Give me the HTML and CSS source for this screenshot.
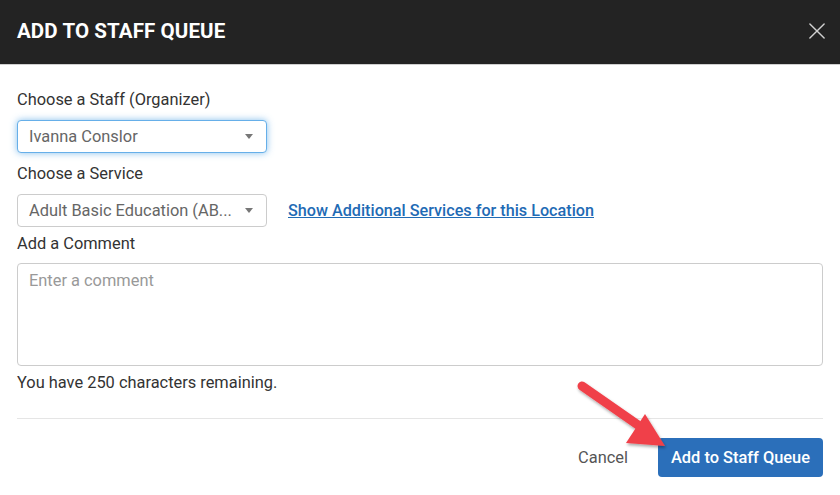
FILE: index.html
```html
<!DOCTYPE html>
<html>
<head>
<meta charset="utf-8">
<link rel="stylesheet" href="styles.css">
</head>
<body>
<div class="modal">
  <div class="modal-header">
    <h1 class="modal-title">ADD TO STAFF QUEUE</h1>
    <button class="close-btn" aria-label="Close">
      <svg width="18" height="18" viewBox="0 0 18 18"><path d="M1 1 L17 17 M17 1 L1 17" stroke="#d0d0d0" stroke-width="1.6" stroke-linecap="round"/></svg>
    </button>
  </div>
  <div class="modal-body">
    <div class="field-label">Choose a Staff (Organizer)</div>
    <div class="select focused"><span class="select-text">Ivanna Conslor</span><span class="caret"></span></div>
    <div class="field-label">Choose a Service</div>
    <div class="row">
      <div class="select"><span class="select-text">Adult Basic Education (AB...</span><span class="caret"></span></div>
      <a class="link" href="#">Show Additional Services for this Location</a>
    </div>
    <div class="field-label tight">Add a Comment</div>
    <div class="textarea"><span class="placeholder">Enter a comment</span></div>
    <div class="count">You have 250 characters remaining.</div>
  </div>
  <div class="modal-footer">
    <button class="btn-cancel">Cancel</button>
    <button class="btn-primary">Add to Staff Queue</button>
  </div>
  <svg class="arrow" width="120" height="90" viewBox="0 0 120 90">
    <defs>
      <filter id="sh" x="-20%" y="-20%" width="140%" height="140%">
        <feDropShadow dx="1" dy="2" stdDeviation="1.5" flood-color="#000" flood-opacity="0.35"/>
      </filter>
    </defs>
    <g filter="url(#sh)">
      <line x1="6" y1="5" x2="62" y2="44" stroke="#f0414a" stroke-width="9" stroke-linecap="round"/>
      <polygon points="89,65 50,62 69,33" fill="#f0414a"/>
    </g>
  </svg>
</div>
</body>
</html>
```

FILE: styles.css
```css
* { box-sizing: border-box; }
html, body { margin: 0; padding: 0; background: #fff; }
body { font-family: Roboto, "Liberation Sans", Arial, sans-serif; color: #333; }

.modal { position: relative; width: 840px; height: 495px; background: #fff; }

.modal-header {
  height: 65px;
  background: #232323;
  border-bottom: 1px solid #cfcfcf;
  display: flex;
  align-items: center;
  justify-content: space-between;
  padding: 0 13px 2px 17px;
}
.modal-title {
  margin: 0;
  color: #fff;
  font-size: 20.5px;
  font-weight: 700;
  letter-spacing: 0.1px;
}
.close-btn {
  background: none;
  border: 0;
  padding: 0;
  width: 20px;
  height: 20px;
  display: flex;
  align-items: center;
  justify-content: center;
  margin-bottom: 1px;
}
.close-btn svg { width: 16px; height: 16px; }

.modal-body { padding: 25px 17px 0 17px; }

.field-label {
  font-size: 16.4px;
  line-height: 20px;
  color: #333;
  margin-bottom: 10px;
}
.field-label.tight { margin-bottom: 9px; margin-top: -3px; }

.select {
  width: 250px;
  height: 33px;
  border: 1px solid #ccc;
  border-radius: 4px;
  display: flex;
  align-items: center;
  justify-content: space-between;
  padding: 0 13px 0 11px;
  margin-bottom: 11px;
  background: #fff;
}
.select.focused {
  height: 33px;
  border-color: #66afe9;
  box-shadow: 0 0 7px rgba(102, 175, 233, 0.8);
}
.select-text { font-size: 16.4px; color: #666; white-space: nowrap; }
.caret {
  width: 0; height: 0;
  border-left: 4.5px solid transparent;
  border-right: 4.5px solid transparent;
  border-top: 5px solid #777;
}

.row { display: flex; align-items: center; gap: 21px; }
.row .select { margin-bottom: 10px; }
.row .link { margin-bottom: 10px; }
.link {
  color: #1f6bb5;
  font-size: 16.2px;
  font-weight: 500;
  text-decoration: underline;
  letter-spacing: 0;
}

.textarea {
  width: 806px;
  height: 103px;
  border: 1px solid #ccc;
  border-radius: 4px;
  padding: 7px 11px;
}
.placeholder { font-size: 16.4px; color: #999; }

.count { font-size: 16.4px; color: #333; line-height: 20px; margin-top: 7px; }

.modal-footer {
  margin: 25px 17px 0 17px;
  border-top: 1px solid #e5e5e5;
  padding-top: 19px;
  display: flex;
  justify-content: flex-end;
  align-items: center;
  gap: 30px;
}
.btn-cancel {
  background: none;
  border: 0;
  font-family: inherit;
  font-size: 16.4px;
  color: #555;
  padding: 0;
}
.btn-primary {
  font-family: inherit;
  background: #2b6fba;
  color: #fff;
  border: 0;
  border-radius: 4px;
  height: 39px;
  width: 165px;
  font-size: 16.4px;
  font-weight: 500;
  padding: 0;
}

.arrow { position: absolute; left: 576px; top: 381px; }
```
